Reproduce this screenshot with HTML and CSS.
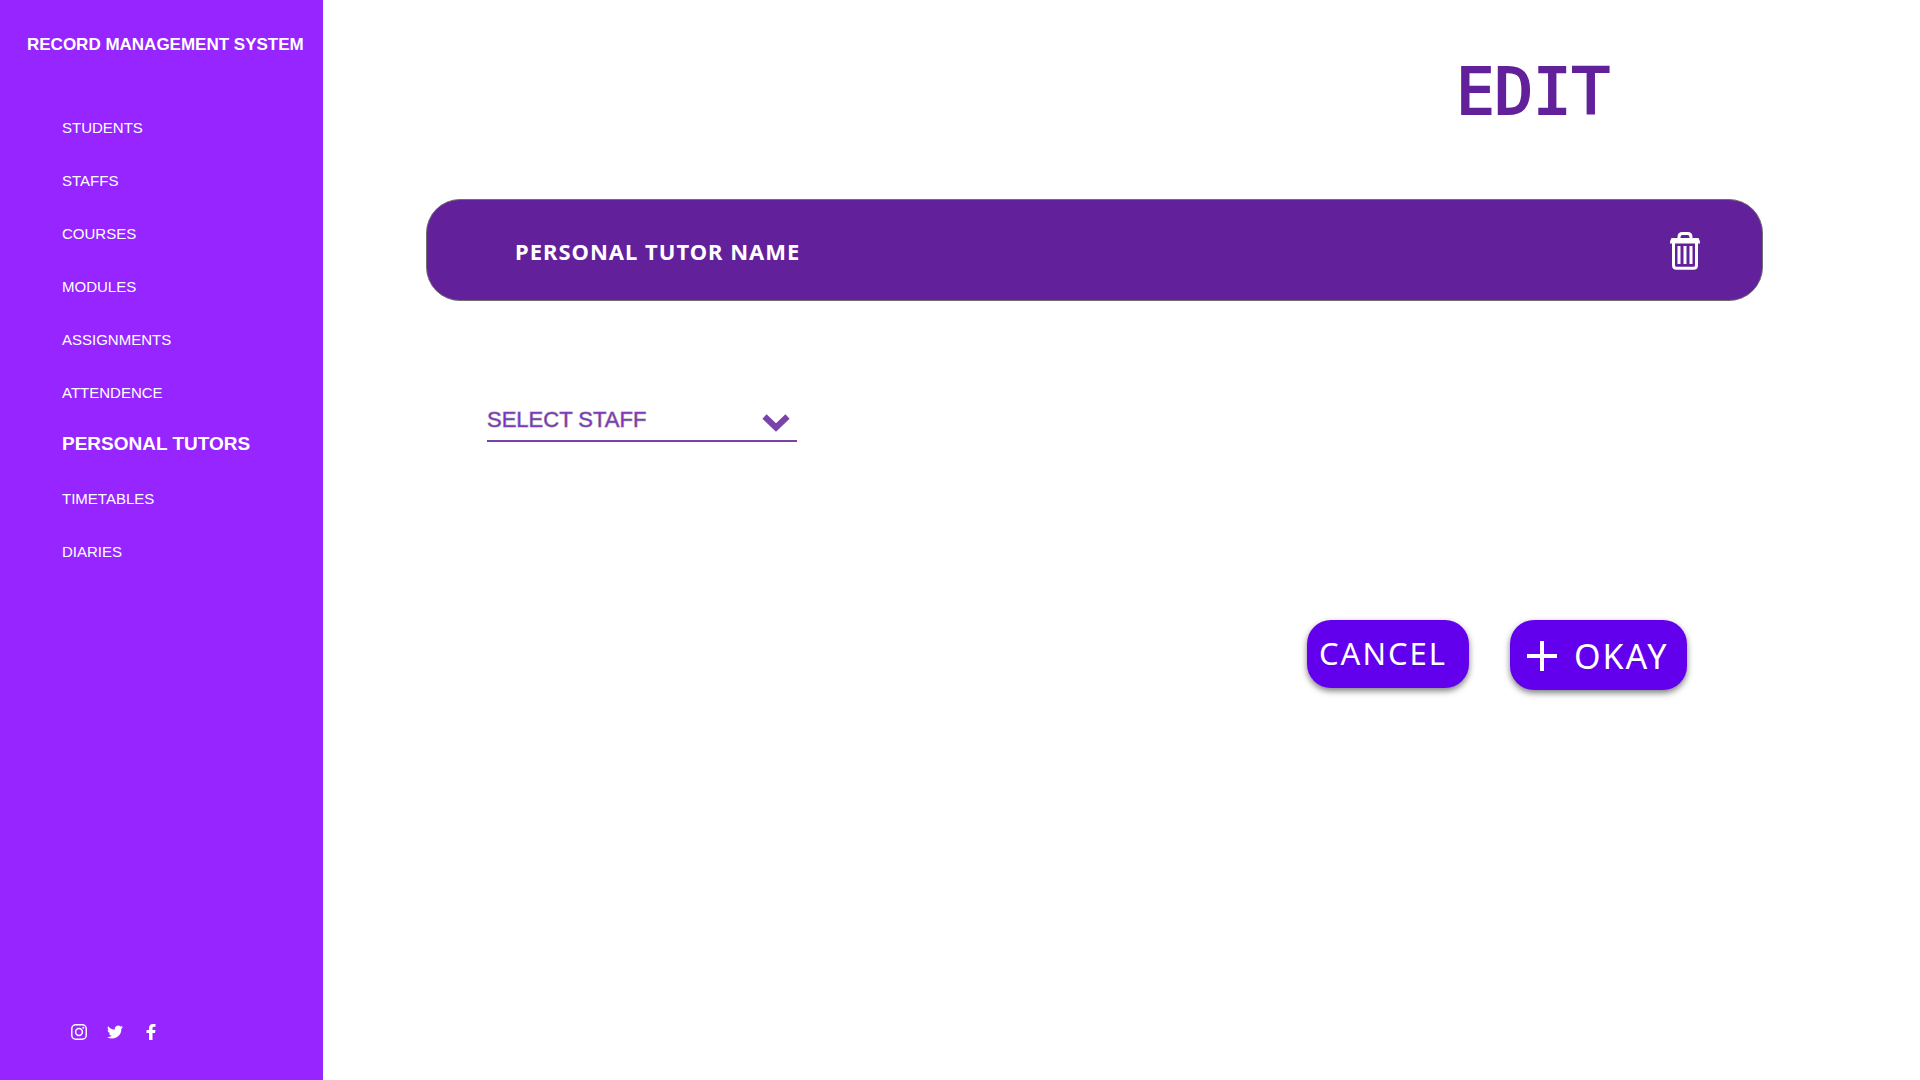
FILE: index.html
```html
<!DOCTYPE html>
<html lang="en">
<head>
<meta charset="utf-8">
<meta name="viewport" content="width=device-width, initial-scale=1">
<title>Record Management System</title>
<link rel="stylesheet" href="styles.css">
</head>
<body>
<div class="app">
  <aside class="sidebar">
    <h2 class="brand">RECORD MANAGEMENT SYSTEM</h2>
    <nav class="menu">
      <a href="#">STUDENTS</a>
      <a href="#">STAFFS</a>
      <a href="#">COURSES</a>
      <a href="#">MODULES</a>
      <a href="#">ASSIGNMENTS</a>
      <a href="#">ATTENDENCE</a>
      <a href="#" class="active" aria-current="page">PERSONAL TUTORS</a>
      <a href="#">TIMETABLES</a>
      <a href="#">DIARIES</a>
    </nav>
    <div class="social">
      <a href="#" aria-label="Instagram"><svg viewBox="0 0 16 16" fill="none" stroke="currentColor" stroke-width="1.5"><rect x=".75" y=".75" width="14.5" height="14.5" rx="4"/><circle cx="8" cy="8" r="3.4"/><circle cx="12.3" cy="3.7" r="1" fill="currentColor" stroke="none"/></svg></a>
      <a href="#" aria-label="Twitter"><svg viewBox="0 0 24 24" fill="currentColor"><path d="M24 4.6a10 10 0 0 1-2.8.8 5 5 0 0 0 2.1-2.7 10 10 0 0 1-3.1 1.2 4.9 4.9 0 0 0-8.4 4.5A14 14 0 0 1 1.7 3.2a4.9 4.9 0 0 0 1.5 6.5 5 5 0 0 1-2.2-.6 4.9 4.9 0 0 0 3.9 4.9 5 5 0 0 1-2.2.1 4.9 4.9 0 0 0 4.6 3.4A9.9 9.9 0 0 1 0 19.5 14 14 0 0 0 21.5 7.1 10 10 0 0 0 24 4.6z"/></svg></a>
      <a href="#" aria-label="Facebook"><svg viewBox="0 0 16 16" fill="currentColor"><path d="M6 16V9H3.500V6H6V4.200C6 1.600 7.500 0 10 0h2.500v2.800H11C9.900 2.800 9.500 3.300 9.500 4.300V6h3L12 9H9.500v7z"/></svg></a>
    </div>
  </aside>
  <main class="content">
    <h1 class="title">EDIT</h1>
    <section class="tutor">
      <h2 class="tutor-name">PERSONAL TUTOR NAME</h2>
      <button class="delete" type="button" aria-label="Delete tutor">
        <svg viewBox="0 0 32 38" fill="none" stroke="#fff"><path d="M10 7.500V5q0-3.500 3.500-3.500h5Q22 1.500 22 5v2.500" stroke-width="3"/><path d="M2.500 6h27q1.500 2.500 1.500 5.500H1q0-3 1.500-5.500z" fill="#fff" stroke="none"/><path d="M4.500 11v22.200q0 3 3 3h17q3 0 3-3V11" stroke-width="3"/><path d="M10 14v18M16 14v18M22 14v18" stroke-width="3"/></svg>
      </button>
    </section>
    <form class="form">
      <div class="field">
        <select class="staff" aria-label="Select staff"><option>SELECT STAFF</option></select>
        <svg class="chevron" viewBox="0 0 28 18" fill="none" stroke="#7b42aa" stroke-width="6"><path d="M2.500 2.500 14 13.500 25.500 2.500"/></svg>
      </div>
      <div class="actions">
        <button class="btn cancel" type="button">CANCEL</button>
        <button class="btn okay" type="submit"><svg viewBox="0 0 30 30" stroke="#fff" stroke-width="4"><path d="M15 0v30M0 15h30"/></svg>OKAY</button>
      </div>
    </form>
  </main>
</div>
</body>
</html>
```
FILE: styles.css
```css
* { box-sizing: border-box; }
body {
  margin: 0;
  background: #fff;
  font-family: Arial, "Liberation Sans", sans-serif;
}
.app {
  display: flex;
  min-height: 100vh;
}
.sidebar {
  flex: 0 0 323px;
  display: flex;
  flex-direction: column;
  padding: 35px 16px 40px 27px;
  background: #9625ff;
  color: #fff;
}
.brand {
  margin: 0;
  font-size: 17px;
  line-height: 20px;
  white-space: nowrap;
}
.menu {
  display: flex;
  flex-direction: column;
  padding: 46px 0 0 35px;
}
.menu a {
  color: #fff;
  font-size: 15px;
  line-height: 53px;
  text-decoration: none;
}
.menu .active {
  padding-bottom: 3px;
  font-size: 19px;
  font-weight: bold;
  line-height: 50px;
}
.social {
  display: flex;
  gap: 20px;
  margin-top: auto;
  padding-left: 44px;
}
.social a { color: #fff; }
.social svg {
  display: block;
  width: 16px;
  height: 16px;
}
.content {
  flex: 1;
  padding: 56px 157px 0 103px;
}
.title {
  margin: 0 153px 0 0;
  color: #62219b;
  font: 400 64px/72px "Comic Sans MS", "DejaVu Sans Mono", monospace;
  text-align: right;
  -webkit-text-stroke: 2px #62219b;
  stroke-linejoin: round;
}
.tutor {
  display: flex;
  align-items: center;
  justify-content: space-between;
  height: 102px;
  margin-top: 71px;
  padding: 1px 61px 0 88px;
  border: 1px solid #707070;
  border-radius: 34px;
  background: #62219b;
}
.tutor-name {
  margin: 0;
  color: #fff;
  font: 700 22px/32px "Noto Sans", sans-serif;
  letter-spacing: 1px;
}
.delete {
  padding: 0;
  border: 0;
  background: none;
}
.delete svg {
  display: block;
  width: 32px;
  height: 38px;
}
.form { padding: 100px 76px 0 61px; }
.field {
  position: relative;
  width: 310px;
}
.staff {
  display: block;
  width: 100%;
  height: 41px;
  padding: 0 0 2px;
  border: 0;
  border-bottom: 2px solid #7b42aa;
  background: none;
  color: #8b1fe8;
  font: 400 22px/32px Arial, "Liberation Sans", sans-serif;
  -webkit-text-stroke: 1px #70707099;
  appearance: none;
}
.chevron {
  position: absolute;
  right: 7px;
  top: 13px;
  width: 28px;
  height: 18px;
  pointer-events: none;
}
.actions {
  display: flex;
  align-items: flex-start;
  justify-content: flex-end;
  gap: 41px;
  margin-top: 178px;
}
.btn {
  display: flex;
  align-items: center;
  border: 0;
  border-radius: 24px;
  background: #6200ee;
  color: #fff;
  box-shadow: 0 3px 6px #00000080;
  font-family: "Noto Sans", sans-serif;
  letter-spacing: 2px;
}
.cancel {
  width: 162px;
  height: 68px;
  padding: 0 12px 2px;
  font-size: 31px;
}
.okay {
  gap: 17px;
  width: 177px;
  height: 70px;
  padding: 2px 17px 0;
  font-size: 34px;
}
.okay svg {
  width: 30px;
  height: 30px;
}
```
